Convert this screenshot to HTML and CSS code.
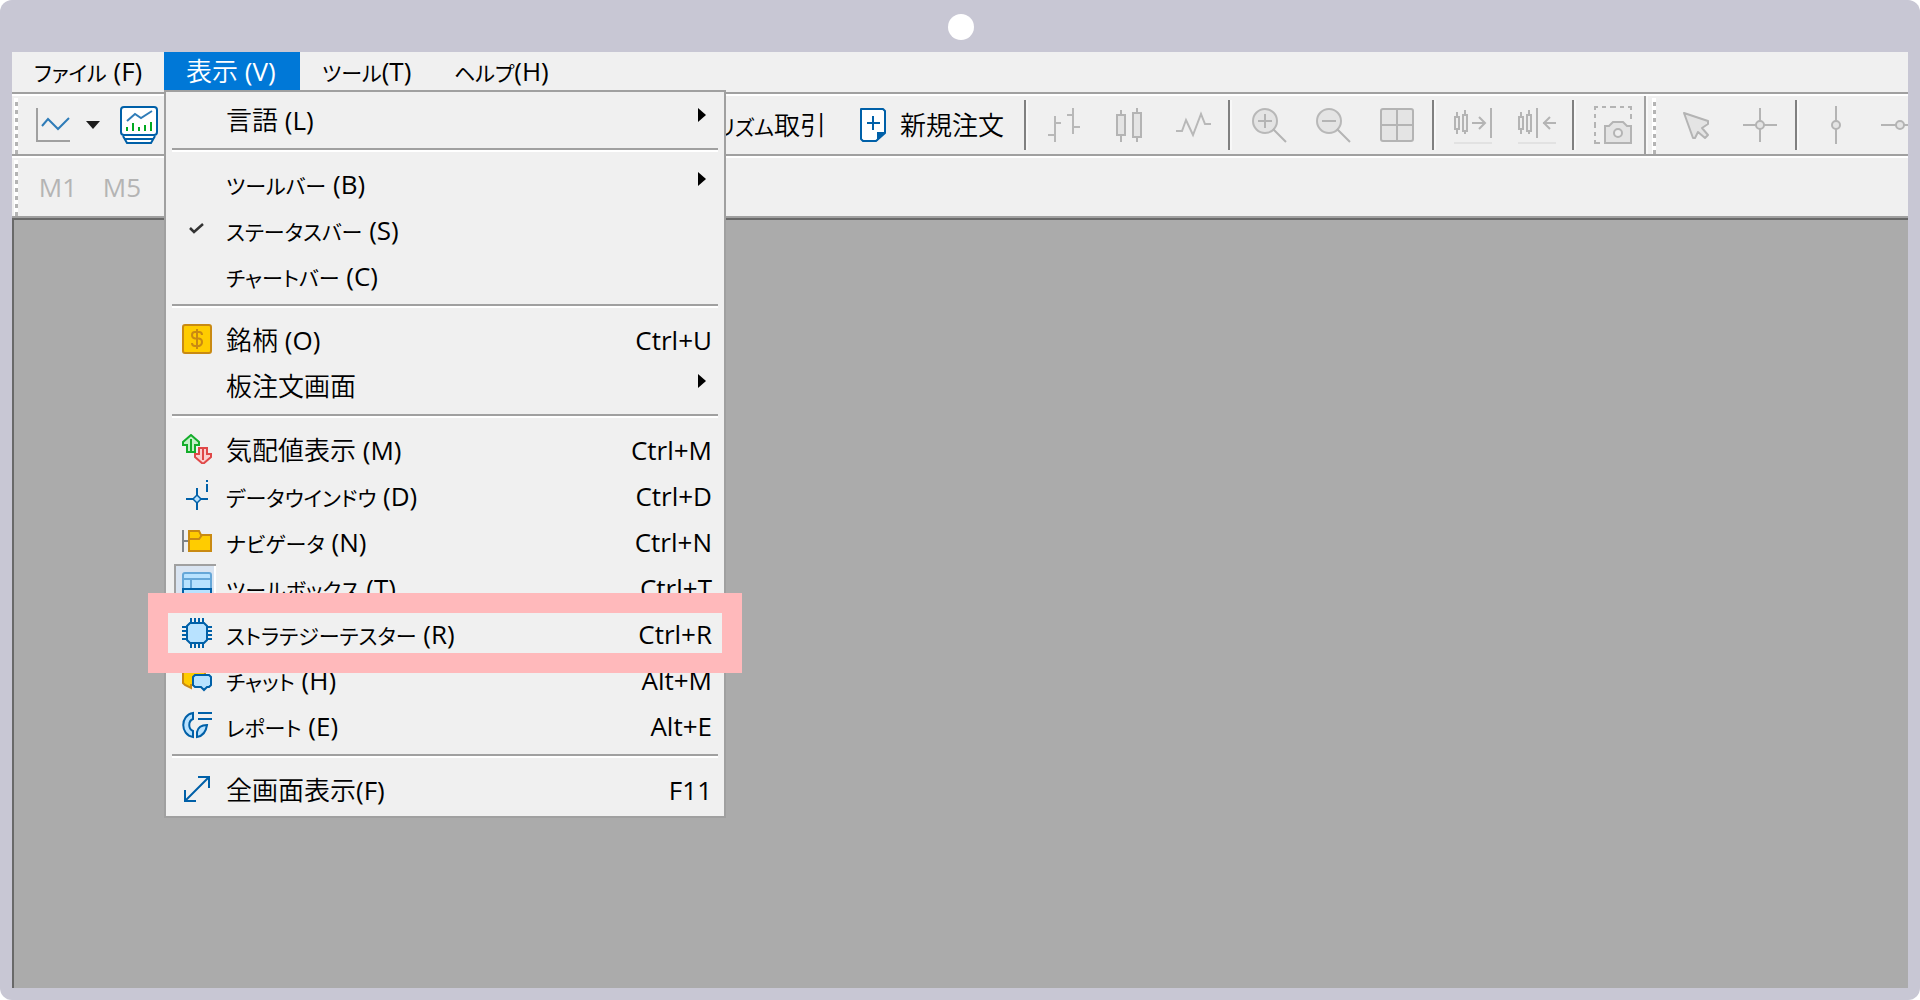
FILE: index.html
```html
<!DOCTYPE html>
<html lang="ja">
<head>
<meta charset="utf-8">
<title>表示メニュー</title>
<link rel="stylesheet" href="styles.css">
</head>
<body>
<div class="device">
  <div class="device-top"><span class="camera"></span></div>
  <div class="window">
    <nav class="menubar">
      <button class="menu-button menu-file"><span class="kana">ファイル</span> (F)</button>
      <div class="menu-holder">
        <button class="menu-button menu-view">表示 (V)</button>
        <div class="dropdown" role="menu">
          <button class="item" role="menuitem"><span class="icon-cell"></span><span class="label">言語 (L)</span><span class="arrow"></span></button>
          <hr class="rule">
          <button class="item" role="menuitem"><span class="icon-cell"></span><span class="label"><span class="kana">ツールバー</span> (B)</span><span class="arrow"></span></button>
          <button class="item" role="menuitem"><span class="icon-cell"><svg viewBox="0 0 30 30"><path d="M8 14l4 4 9-8" fill="none" stroke="#333" stroke-width="2.500"/></svg></span><span class="label"><span class="kana">ステータスバー</span> (S)</span></button>
          <button class="item" role="menuitem"><span class="icon-cell"></span><span class="label"><span class="kana">チャートバー</span> (C)</span></button>
          <hr class="rule">
          <button class="item" role="menuitem"><span class="icon-cell"><svg viewBox="0 0 30 30"><rect x="1" y="1" width="28" height="28" rx="2" fill="#fc0" stroke="#c98a12" stroke-width="2"/><path d="M20 11q0-3-3-3h-4q-3 0-3 3t3 3.500h4q3 .5 3 3.500t-3 4h-4q-3 0-3-3M15 5v20" fill="none" stroke="#c98a12" stroke-width="2"/></svg></span><span class="label">銘柄 (O)</span><kbd>Ctrl+U</kbd></button>
          <button class="item" role="menuitem"><span class="icon-cell"></span><span class="label">板注文画面</span><span class="arrow"></span></button>
          <hr class="rule">
          <button class="item" role="menuitem"><span class="icon-cell"><svg viewBox="0 0 30 30"><path d="M9 1l8 7v3h-4v7H5v-7H1V8z" fill="#c4f0c8" stroke="#14ad2b" stroke-width="2"/><path d="M9 5v12" stroke="#14ad2b" stroke-width="2"/><path d="M21 30l-8-7v-3h4v-6h8v6h4v3z" fill="#fbd0d0" stroke="#e04848" stroke-width="2"/><path d="M21 15v11" stroke="#e04848" stroke-width="2"/></svg></span><span class="label">気配値表示 (M)</span><kbd>Ctrl+M</kbd></button>
          <button class="item" role="menuitem"><span class="icon-cell"><svg viewBox="0 0 30 30"><path d="M15 8v22M4 19h22M25 4v8M25 0v2" stroke="#0060a8" stroke-width="2"/><path d="M15 15l4 4-4 4-4-4z" fill="#b8e2ff" stroke="#0060a8" stroke-width="1.500"/></svg></span><span class="label"><span class="kana">データウインドウ</span> (D)</span><kbd>Ctrl+D</kbd></button>
          <button class="item" role="menuitem"><span class="icon-cell"><svg viewBox="0 0 30 30"><path d="M1 4v22M1 15h5" stroke="#808488" stroke-width="2"/><path d="M7 5h10l2 4h10v16H7z" fill="#fc0" stroke="#c98a12" stroke-width="2"/><path d="M7 13h10l3-4" fill="none" stroke="#c98a12" stroke-width="2"/></svg></span><span class="label"><span class="kana">ナビゲータ</span> (N)</span><kbd>Ctrl+N</kbd></button>
          <button class="item" role="menuitem"><span class="icon-cell pressed"><svg viewBox="0 0 30 30"><rect x="1" y="1" width="28" height="28" rx="2" fill="#b8e2ff" stroke="#66a7d8" stroke-width="2"/><path d="M1 7h28M9 7v10" stroke="#66a7d8" stroke-width="2"/><path d="M0 17h30M1 17v12h28V17" fill="none" stroke="#0060a8" stroke-width="2"/></svg></span><span class="label"><span class="kana">ツールボックス</span> (T)</span><kbd>Ctrl+T</kbd></button>
          <button class="item marked" role="menuitem"><span class="icon-cell"><svg viewBox="0 0 30 30"><path d="M9 0v30M13 0v30M17 0v30M21 0v30M0 9h30M0 13h30M0 17h30M0 21h30" stroke="#0060a8" stroke-width="2"/><path d="M8 5h14l3 3v14l-3 3H8l-3-3V8z" fill="#b8e2ff" stroke="#0060a8" stroke-width="2"/></svg></span><span class="label"><span class="kana">ストラテジーテスター</span> (R)</span><kbd>Ctrl+R</kbd></button>
          <button class="item" role="menuitem"><span class="icon-cell"><svg viewBox="0 0 30 30"><path d="M1 3h22v18H9v3l-6-3-2-2z" fill="#fc0" stroke="#c98a12" stroke-width="2"/><path d="M13 11h14l2 2v8l-2 2h-2l-3 3-3-3h-6l-2-2v-8z" fill="#b8e2ff" stroke="#0060a8" stroke-width="2"/></svg></span><span class="label"><span class="kana">チャット</span> (H)</span><kbd>Alt+M</kbd></button>
          <button class="item" role="menuitem"><span class="icon-cell"><svg viewBox="0 0 30 30"><path d="M11 3C-2 5-2 25 11 27v-6c-5-2-5-10 0-12z" fill="#b8e2ff" stroke="#0060a8" stroke-width="2"/><path d="M15 27v-5c1-5 5-7 10-7-1 7-4 11-10 12zM16 3h14M16 9h14" fill="#b8e2ff" stroke="#0060a8" stroke-width="2"/></svg></span><span class="label"><span class="kana">レポート</span> (E)</span><kbd>Alt+E</kbd></button>
          <hr class="rule">
          <button class="item" role="menuitem"><span class="icon-cell"><svg viewBox="0 0 30 30"><path d="M4 26L26 4M16 3h11v11M3 16v11h11" fill="none" stroke="#0060a8" stroke-width="2"/></svg></span><span class="label">全画面表示(F)</span><kbd>F11</kbd></button>
        </div>
      </div>
      <button class="menu-button menu-tools"><span class="kana">ツール</span>(T)</button>
      <button class="menu-button"><span class="kana">ヘルプ</span>(H)</button>
    </nav>

    <div class="toolbar">
      <span class="grip"></span>
      <div class="lead-tools">
        <button class="split" aria-label="チャート種類"><svg class="tool-icon" viewBox="0 0 38 38"><path d="M3 2v33h33" fill="none" stroke="#a0a0a0" stroke-width="2"/><path d="M8 20l6-7 10 10 11-11" fill="none" stroke="#2f7cb8" stroke-width="2"/></svg><span class="caret"></span></button>
        <button class="tool" aria-label="チャート"><svg class="tool-icon" viewBox="0 0 38 38"><path d="M3 30l4 7h24l4-7" fill="#fff" stroke="#0060a8" stroke-width="2"/><rect x="1" y="1" width="36" height="28" rx="3" fill="#fff" stroke="#0060a8" stroke-width="2"/><path d="M4 33h30" stroke="#0060a8" stroke-width="2"/><path d="M7 15l8-7 6 4 11-7" fill="none" stroke="#2f7cb8" stroke-width="2"/><path d="M7 25v-4M13 25v-8M19 25v-4M25 25v-6M31 25v-9" stroke="#00a920" stroke-width="2"/></svg></button>
        <button class="text-tool algo"><span class="kana">アルゴリズム</span>取引</button>
      </div>
      <button class="text-tool order"><svg class="tool-icon" viewBox="0 0 38 38"><path d="M7 3h22l2 2v22l-9 8H9l-2-2V5z" fill="#fff" stroke="#0060a8" stroke-width="2" stroke-linejoin="round"/><path d="M31 26h-8v9z" fill="#0060a8"/><path d="M13 17h13M19 10v14" stroke="#0060a8" stroke-width="2"/></svg>新規注文</button>
      <span class="divider"></span>
      <button class="tool" aria-label="バーチャート"><svg class="tool-icon" viewBox="0 0 38 38"><path d="M9 10v26M2 29h7M9 17h6M27 2v26M21 9h6M27 21h7" fill="none" stroke="#b8b8b8" stroke-width="2"/></svg></button>
      <button class="tool" aria-label="ローソク足"><svg class="tool-icon" viewBox="0 0 38 38"><path d="M11 4v32M27 2v34" stroke="#b4b4b4" stroke-width="2"/><rect x="7" y="9" width="8" height="20" fill="#e4e4e4" stroke="#b4b4b4" stroke-width="2"/><rect x="23" y="7" width="8" height="24" fill="#e4e4e4" stroke="#b4b4b4" stroke-width="2"/></svg></button>
      <button class="tool" aria-label="ライン"><svg class="tool-icon" viewBox="0 0 38 38"><path d="M2 25h6l4-11 7 15 8-21 4 10h6" fill="none" stroke="#b8b8b8" stroke-width="2"/></svg></button>
      <span class="divider"></span>
      <button class="tool" aria-label="拡大"><svg class="tool-icon" viewBox="0 0 38 38"><circle cx="15" cy="15" r="12" fill="#e4e4e4" stroke="#b8b8b8" stroke-width="2"/><path d="M8 15h14M15 8v14M23 23l13 13" stroke="#b4b4b4" stroke-width="2"/></svg></button>
      <button class="tool" aria-label="縮小"><svg class="tool-icon" viewBox="0 0 38 38"><circle cx="15" cy="15" r="12" fill="#e4e4e4" stroke="#b8b8b8" stroke-width="2"/><path d="M8 15h14M23 23l13 13" stroke="#b4b4b4" stroke-width="2"/></svg></button>
      <button class="tool" aria-label="タイル表示"><svg class="tool-icon" viewBox="0 0 38 38"><rect x="3" y="3" width="32" height="32" rx="2" fill="#e4e4e4" stroke="#b4b4b4" stroke-width="2"/><path d="M3 19h32M19 3v32" stroke="#b4b4b4" stroke-width="2"/></svg></button>
      <span class="divider"></span>
      <button class="tool" aria-label="自動スクロール"><svg class="tool-icon" viewBox="0 0 38 38"><path d="M3 6v22M11 4v24M18 17h13M25 11l6 6-6 6M37 2v30" fill="none" stroke="#b4b4b4" stroke-width="2"/><path d="M1 11h4v12H1zM9 9h4v16H9z" fill="#eee" stroke="#b4b4b4" stroke-width="2"/><path d="M0 37h38" stroke="#e2e2e2" stroke-width="2"/></svg></button>
      <button class="tool" aria-label="チャートシフト"><svg class="tool-icon" viewBox="0 0 38 38"><path d="M3 6v22M11 4v24M19 2v30M38 17H25M32 11l-6 6 6 6" fill="none" stroke="#b4b4b4" stroke-width="2"/><path d="M1 11h4v12H1zM9 9h4v16H9z" fill="#eee" stroke="#b4b4b4" stroke-width="2"/><path d="M0 37h38" stroke="#e2e2e2" stroke-width="2"/></svg></button>
      <span class="divider"></span>
      <button class="tool" aria-label="スクリーンショット"><svg class="tool-icon" viewBox="0 0 38 38"><path d="M1 4V1h3M8 1h4M16 1h6M26 1h4M34 1h3v3M37 8v5M1 8v4M1 16v6M1 26v4M1 34v3h5" fill="none" stroke="#b4b4b4" stroke-width="2"/><path d="M11 20h4l4-4h10l4 4h4v17H11z" fill="#e4e4e4" stroke="#b4b4b4" stroke-width="2"/><circle cx="24" cy="27" r="4" fill="#eee" stroke="#b4b4b4" stroke-width="2"/></svg></button>
      <span class="band-edge"></span>
      <span class="grip"></span>
      <button class="tool" aria-label="カーソル"><svg class="tool-icon" viewBox="0 0 38 38"><path d="M7 7l24 8v3l-6 4 6 7-3 3-7-6-3 6h-2z" fill="#e4e4e4" stroke="#b4b4b4" stroke-width="2" stroke-linejoin="round"/></svg></button>
      <button class="tool" aria-label="十字カーソル"><svg class="tool-icon" viewBox="0 0 38 38"><path d="M19 2v34M2 19h34" stroke="#b4b4b4" stroke-width="2"/><circle cx="19" cy="19" r="4" fill="#e4e4e4" stroke="#b4b4b4" stroke-width="2"/></svg></button>
      <span class="divider"></span>
      <button class="tool" aria-label="垂直線"><svg class="tool-icon" viewBox="0 0 38 38"><path d="M19 0v38" stroke="#b4b4b4" stroke-width="2"/><circle cx="19" cy="19" r="4" fill="#e4e4e4" stroke="#b4b4b4" stroke-width="2"/></svg></button>
      <button class="tool" aria-label="水平線"><svg class="tool-icon" viewBox="0 0 38 38"><path d="M0 19h38" stroke="#b4b4b4" stroke-width="2"/><circle cx="19" cy="19" r="4" fill="#e4e4e4" stroke="#b4b4b4" stroke-width="2"/></svg></button>
    </div>

    <div class="toolbar">
      <span class="grip"></span>
      <button class="tool period" disabled>M1</button>
      <button class="tool period" disabled>M5</button>
    </div>

    <main class="workspace"></main>
  </div>
</div>
</body>
</html>
```
FILE: styles.css
```css
* {
  box-sizing: border-box;
}

body {
  margin: 0;
  background: #fff;
  color: #000;
  font-family: "Open Sans", "Noto Sans CJK JP DemiLight", "Noto Sans CJK JP", sans-serif;
  font-size: 26px;
  line-height: 38px;
}

button {
  flex: none;
  margin: 0;
  padding: 0;
  border: 0;
  background: none;
  color: inherit;
  font: inherit;
  text-align: left;
  white-space: nowrap;
}

svg {
  display: block;
}

.kana {
  font-family: "Noto Sans CJK JP", sans-serif;
  font-size: 21px;
  font-feature-settings: "palt";
}

.device {
  display: flex;
  flex-direction: column;
  min-height: 100vh;
  padding: 0 12px 12px;
  border-radius: 12px;
  background: #c8c7d4;
}

.device-top {
  display: flex;
  justify-content: center;
  align-items: center;
  height: 52px;
  padding: 2px 0 0 2px;
}

.camera {
  width: 26px;
  height: 26px;
  border-radius: 50%;
  background: #fff;
}

.window {
  display: flex;
  flex: 1;
  flex-direction: column;
  overflow: hidden;
  background: #f0f0f0;
}

/* Menu bar */

.menubar {
  display: flex;
  height: 40px;
}

.menu-button {
  height: 38px;
  padding: 0 22px;
}

.menu-file {
  width: 152px;
}

.menu-view {
  width: 136px;
  background: #0078d7;
  color: #fff;
}

.menu-tools {
  width: 132px;
}

.menu-holder {
  position: relative;
}

/* Drop-down menu */

.dropdown {
  position: absolute;
  z-index: 1;
  top: 38px;
  left: 0;
  width: 562px;
  padding: 6px 0 2px;
  border: 2px solid #a0a0a0;
  background: #f0f0f0;
}

.item {
  display: flex;
  position: relative;
  width: 100%;
  height: 46px;
  padding: 0 12px 0 8px;
  line-height: 44px;
}

.icon-cell {
  flex: none;
  width: 42px;
  height: 44px;
  margin: -2px 10px 0 0;
  padding: 8px 4px 6px 8px;
}

.icon-cell svg {
  width: 30px;
  height: 30px;
}

.pressed {
  background: #d9e4f1;
  box-shadow: inset 2px 2px #a0a0a0, inset -2px -2px #fff;
}

.label {
  flex: 1;
}

kbd {
  font-family: inherit;
}

.arrow {
  width: 8px;
  height: 14px;
  margin: 10px 6px 0 0;
  background: #000;
  clip-path: polygon(0 0, 100% 50%, 0 100%);
}

.rule {
  height: 4px;
  margin: 4px 6px 10px;
  border: 0;
  border-top: 2px solid #a0a0a0;
  background: #fff;
}

.marked::after {
  content: "";
  position: absolute;
  z-index: 1;
  inset: -19px -18px -15px;
  border: 20px solid #ffb9bb;
}

/* Toolbars */

.toolbar {
  display: flex;
  align-items: center;
  height: 62px;
  padding: 2px 0 0 2px;
  border-top: 2px solid #a0a0a0;
  box-shadow: inset 0 2px #fff;
}

.toolbar + .toolbar {
  height: 64px;
  border-bottom: 2px solid #a0a0a0;
}

.grip {
  flex: none;
  width: 4px;
  height: 56px;
  margin: 2px 8px 0 0;
  background: conic-gradient(from 90deg at 1px 4px, #b4b4b4 25%, #fff 0) 0 0 / 4px 8px;
}

.tool {
  display: flex;
  justify-content: center;
  width: 64px;
}

.tool-icon {
  flex: none;
  width: 38px;
  height: 38px;
}

.lead-tools {
  display: flex;
  flex: none;
  align-items: center;
  width: 800px;
}

.split {
  display: flex;
  align-items: center;
  gap: 14px;
  width: 81px;
  padding-left: 8px;
}

.caret {
  width: 14px;
  height: 8px;
  background: #1c1c1c;
  clip-path: polygon(0 0, 100% 0, 50% 100%);
}

.algo {
  margin-left: auto;
}

.order {
  display: flex;
  gap: 8px;
  width: 195px;
  padding-left: 28px;
}

.divider {
  flex: none;
  width: 2px;
  height: 50px;
  margin: 0 7px 0 3px;
  background: #808080;
  box-shadow: 2px 0 #f8f8f8;
}

.band-edge {
  flex: none;
  align-self: stretch;
  width: 4px;
  margin: 0 4px 0 -1px;
  border-left: 2px solid #a0a0a0;
  background: #f8f8f8;
}

.period {
  color: #b4b4b4;
}

/* Chart area */

.workspace {
  flex: 1;
  border-top: 2px solid #696969;
  border-left: 2px solid #696969;
  background: #ababab;
}
```
